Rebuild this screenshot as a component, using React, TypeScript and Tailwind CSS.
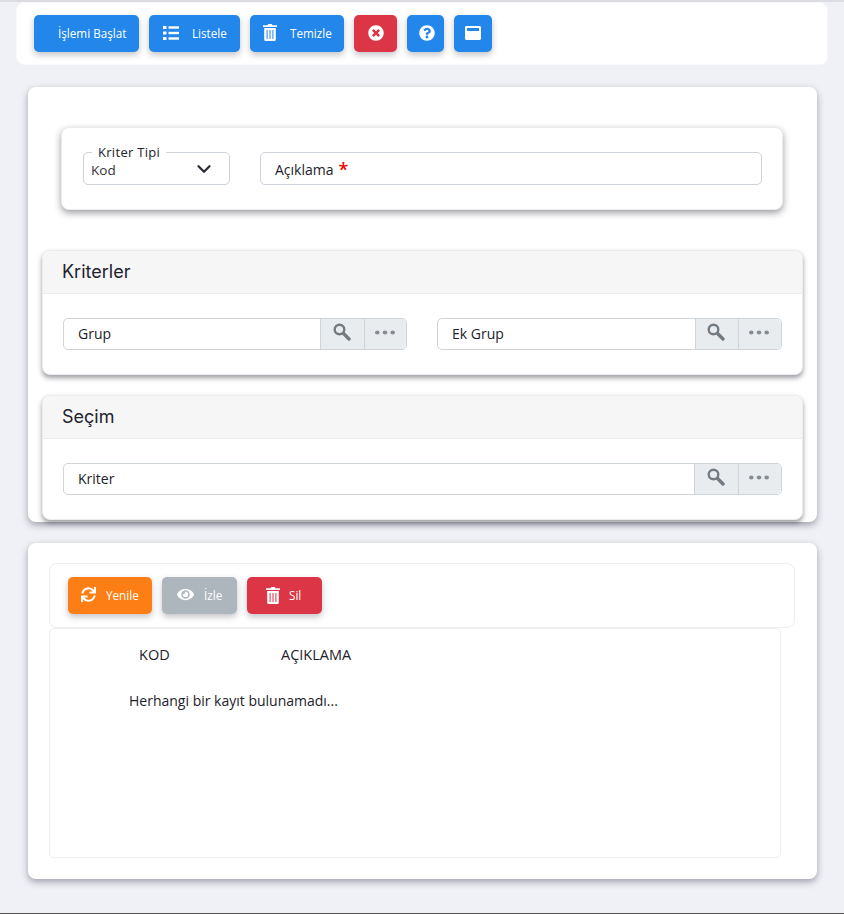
import React from "react";
import {
  FaTimesCircle,
  FaQuestionCircle,
  FaWindowMaximize,
  FaSync,
  FaEye,
} from "react-icons/fa";
import { LuChevronDown } from "react-icons/lu";

const btn =
  "h-[37px] flex items-center rounded-[5px] text-white text-[11.7px] shadow-[0_3px_6px_rgba(60,60,80,0.3)]";

const ListIcon = () => (
  <svg width="16" height="14" viewBox="0 0 16 14" fill="currentColor" className="mr-[13px] -mt-[2px]">
    <rect x="0" y="0" width="3.5" height="3" />
    <rect x="0" y="5.5" width="3.5" height="3" />
    <rect x="0" y="11" width="3.5" height="3" />
    <rect x="5.5" y="0.3" width="10.5" height="2.4" />
    <rect x="5.5" y="5.8" width="10.5" height="2.4" />
    <rect x="5.5" y="11.3" width="10.5" height="2.4" />
  </svg>
);

const TrashIcon = ({ className }: { className: string }) => (
  <svg width="14" height="17" viewBox="0 0 14 17" className={className}>
    <path d="M4.5 1.2 L5.2 0 H8.8 L9.5 1.2 H14 V3 H0 V1.2 Z" fill="currentColor" />
    <path
      d="M1.2 4 H12.8 V15.5 Q12.8 17 11.3 17 H2.7 Q1.2 17 1.2 15.5 Z M3.6 6 V15 H4.6 V6 Z M6.5 6 V15 H7.5 V6 Z M9.4 6 V15 H10.4 V6 Z"
      fill="currentColor"
      fillRule="evenodd"
    />
  </svg>
);

const SearchIcon = () => (
  <svg width="18" height="18" viewBox="0 0 18 18" fill="none" className="-mt-[4px] -ml-[2px] text-[#737b82]">
    <circle cx="6.5" cy="6.5" r="4.8" stroke="currentColor" strokeWidth="2.4" />
    <path d="M10.8 10.8 L16 16" stroke="currentColor" strokeWidth="3.4" strokeLinecap="round" />
  </svg>
);

const DotsIcon = () => (
  <svg width="20" height="5" viewBox="0 0 20 5" fill="#868c92" className="-mt-[3px] -ml-[2px]">
    <ellipse cx="2.3" cy="2.5" rx="2.3" ry="2" />
    <ellipse cx="10" cy="2.5" rx="2.3" ry="2" />
    <ellipse cx="17.7" cy="2.5" rx="2.3" ry="2" />
  </svg>
);

const LookupInput = ({
  label,
  className,
  searchClass,
  dotsClass,
}: {
  label: string;
  className: string;
  searchClass: string;
  dotsClass: string;
}) => {
  return (
    <div className={"flex h-[32px] rounded-[5px] border border-[#ced4da] " + className}>
      <div className="flex-1 pl-[14px] pb-[1px] flex items-center text-[14px] font-medium text-[#22222c]">
        {label}
      </div>
      <div className={"bg-[#e9ecef] border-l border-[#ced4da] flex items-center justify-center " + searchClass}>
        <SearchIcon />
      </div>
      <div className={"bg-[#e9ecef] border-l border-[#ced4da] rounded-r-[5px] flex items-center justify-center " + dotsClass}>
        <DotsIcon />
      </div>
    </div>
  );
};

const Section = ({ title, children }: { title: string; children: React.ReactNode }) => {
  return (
    <div className="w-[761px] h-[125px] bg-white rounded-[8px] border border-[#ececf0] shadow-[0_3px_5px_rgba(40,40,50,0.45)]">
      <div className="h-[43px] bg-[#f6f6f7] border-b border-[#ececf0] rounded-t-[8px] pl-[19px] pb-[2px] flex items-center text-[18px] font-normal text-[#22222e] font-['Inter',sans-serif]">
        {title}
      </div>
      <div className="flex pl-[20px] pt-[24px]">{children}</div>
    </div>
  );
};

const App = () => {
  return (
    <div className="h-[914px] overflow-hidden bg-[#f0f1f6] border-t-2 border-b border-t-[#dcdde2] border-b-[#555555] font-['Open_Sans',sans-serif]">
      {/* ust toolbar */}
      <div className="ml-[16px] w-[812px] h-[63px] bg-white rounded-[8px] border border-[#f8f8fb] flex items-start gap-[10px] pl-[17px] pt-[12px]">
        <button className={btn + " w-[105px] bg-[#2286eb] pl-[24px]"}>İşlemi Başlat</button>
        <button className={btn + " w-[91px] bg-[#2286eb] pl-[14px]"}>
          <ListIcon />
          Listele
        </button>
        <button className={btn + " w-[94px] bg-[#2286eb] pl-[13px]"}>
          <TrashIcon className="mr-[13px] -mt-[3px]" />
          Temizle
        </button>
        <button className={btn + " w-[43px] bg-[#dc3545] justify-center"}>
          <FaTimesCircle className="text-[16px] -mt-[1px]" />
        </button>
        <button className={btn + " w-[37px] bg-[#2286eb] justify-center"}>
          <FaQuestionCircle className="text-[16px] -mt-[1px] ml-[3px]" />
        </button>
        <button className={btn + " w-[38px] bg-[#2286eb] justify-center"}>
          <FaWindowMaximize className="text-[16px] -mt-[1px]" />
        </button>
      </div>

      {/* ana kart */}
      <div className="ml-[28px] mt-[22px] w-[789px] h-[435px] bg-white rounded-[8px] shadow-[0_3px_7px_rgba(60,60,80,0.45)] pt-[40px] pl-[14px]">
        <div className="ml-[19px] w-[722px] h-[83px] bg-white rounded-[8px] border border-[#ececf0] shadow-[0_3px_7px_rgba(40,40,50,0.45)] flex pl-[21px] pt-[24px]">
          <div className="relative w-[147px] h-[33px] rounded-[5px] border border-[#ced2dc] flex items-center justify-between pl-[7px] pr-[14px] text-[13.5px] text-[#33333d]">
            <span className="absolute -top-[8px] left-[8px] bg-white px-[6px] text-[13px] leading-[14px] font-medium tracking-[0.3px] text-[#22222c]">
              Kriter Tipi
            </span>
            <span className="pt-[3px]">Kod</span>
            <LuChevronDown className="text-[22px] text-[#2c2c34]" strokeWidth={2.5} />
          </div>
          <div className="ml-[30px] w-[502px] h-[33px] rounded-[5px] border border-[#ced2dc] flex items-center pl-[14px] text-[14px] font-medium text-[#22222c]">
            <span className="pt-[2px]">Açıklama</span>
            <span className="ml-[5px] text-[18px] leading-[18px] font-semibold text-[#f00000]">*</span>
          </div>
        </div>

        <div className="mt-[40px]">
          <Section title="Kriterler">
            <LookupInput label="Grup" className="w-[344px]" searchClass="w-[44px]" dotsClass="w-[42px]" />
            <LookupInput label="Ek Grup" className="w-[345px] ml-[30px]" searchClass="w-[43px]" dotsClass="w-[43px]" />
          </Section>
        </div>
        <div className="mt-[20px]">
          <Section title="Seçim">
            <LookupInput label="Kriter" className="w-[719px]" searchClass="w-[44px]" dotsClass="w-[43px]" />
          </Section>
        </div>
      </div>

      {/* alt kart */}
      <div className="ml-[28px] mt-[21px] w-[789px] h-[336px] bg-white rounded-[8px] shadow-[0_3px_7px_rgba(60,60,80,0.45)] pt-[20px] pl-[21px]">
        <div className="w-[746px] h-[65px] rounded-[8px] border border-[#eeeef2] flex items-start gap-[10px] pl-[18px] pt-[13px]">
          <button className={btn + " w-[84px] bg-[#fd7e14] pl-[13px]"}>
            <FaSync className="text-[15px] mr-[10px] -mt-[2px]" />
            Yenile
          </button>
          <button className={btn + " w-[75px] bg-[#adb5bd] pl-[15px]"}>
            <FaEye className="text-[17px] mr-[10px] -mt-[2px]" />
            İzle
          </button>
          <button className={btn + " w-[75px] bg-[#dc3545] pl-[19px]"}>
            <TrashIcon className="mr-[9px] -mt-[1px]" />
            Sil
          </button>
        </div>
        <div className="w-[732px] h-[230px] rounded-[5px] border border-[#eeeef2] text-[#22222c]">
          <div className="flex pt-[16px] text-[14.5px] font-medium leading-[20px]">
            <div className="w-[89px]" />
            <div className="w-[142px]">KOD</div>
            <div>AÇIKLAMA</div>
          </div>
          <div className="ml-[79px] mt-[26px] text-[14px] font-medium leading-[20px]">
            Herhangi bir kayıt bulunamadı...
          </div>
        </div>
      </div>
    </div>
  );
};

export default App;
